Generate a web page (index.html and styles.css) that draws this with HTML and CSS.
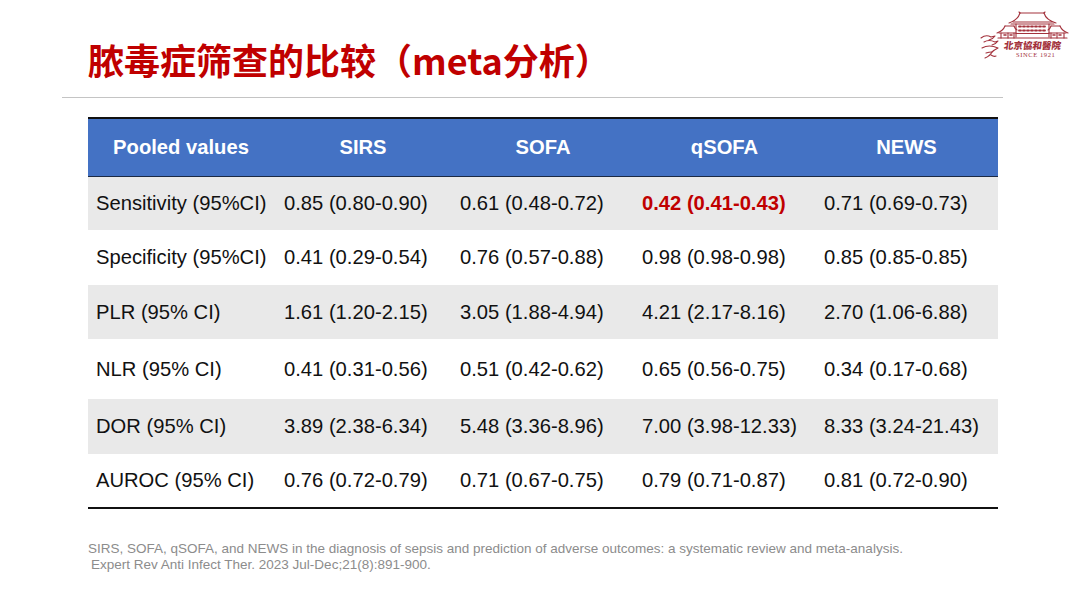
FILE: index.html
```html
<!DOCTYPE html>
<html lang="zh">
<head>
<meta charset="utf-8">
<link rel="stylesheet" href="styles.css">
</head>
<body>
<div class="slide">
  <div class="top">
    <h1 class="title">脓毒症筛查的比较（meta分析）</h1>
    <div class="logo">
      <svg class="logo-art" width="98" height="58" viewBox="0 0 98 58">
        <g fill="none" stroke="#a3323c" stroke-width="1.1" stroke-linejoin="round" stroke-linecap="round">
          <!-- central hall roof -->
          <path d="M42 5 L66 5"/>
          <path d="M41 4 L42 5 M67 4 L66 5"/>
          <path d="M42 5 Q40 12 31 15 M66 5 Q68 12 78 15"/>
          <path d="M35 14 L74 14"/>
          <path d="M33 16 L76 16"/>
          <!-- central body -->
          <path d="M38 16 L38 29 M71 16 L71 29"/>
          <path d="M41 18.5 h2 M45 18.5 h2 M49 18.5 h2 M53 18.5 h2 M57 18.5 h2 M61 18.5 h2 M65 18.5 h2" stroke-width="1.8"/>
          <path d="M41 22.5 h2 M45 22.5 h2 M49 22.5 h2 M53 22.5 h2 M57 22.5 h2 M61 22.5 h2 M65 22.5 h2" stroke-width="1.8"/>
          <path d="M38 25.5 L71 25.5"/>
          <!-- left wing -->
          <path d="M27 18 L36 18"/>
          <path d="M27 18 Q25 23 19 25 M36 18 Q37 21 39 22"/>
          <path d="M21 25 L38 25"/>
          <path d="M23 25 L23 30 M30 25 L30 30 M36 25 L36 30"/>
          <path d="M26 27 h2 M32 27 h2" stroke-width="1.6"/>
          <!-- right wing -->
          <path d="M73 18 L82 18"/>
          <path d="M82 18 Q84 23 90 25 M73 18 Q72 21 70 22"/>
          <path d="M71 25 L88 25"/>
          <path d="M86 25 L86 30 M79 25 L79 30 M73 25 L73 30"/>
          <path d="M75 27 h2 M81 27 h2" stroke-width="1.6"/>
          <path d="M20 30 L89 30"/>
        </g>
        <!-- doves -->
        <g fill="none" stroke="#a3323c" stroke-width="1.1" stroke-linecap="round" stroke-linejoin="round">
          <path d="M3 30 Q8 26 13 29 L17 28 Q15 31 11 32"/>
          <path d="M6 34 Q11 31 17 34 L20 33 Q18 36 14 37"/>
          <path d="M4 40 Q11 36 20 40 Q16 42 14 44 Q12 48 7 50"/>
          <path d="M8 45 Q11 44 14 44"/>
          <path d="M13 47 Q16 49 18 48"/>
        </g>
      </svg>
      <div class="logo-name">北京協和醫院</div>
      <div class="logo-since">SINCE 1921</div>
    </div>
  </div>
  <div class="rule"></div>
  <table class="data">
    <colgroup>
      <col class="c1"><col class="c2"><col class="c3"><col class="c4"><col class="c5">
    </colgroup>
    <thead>
      <tr>
        <th>Pooled values</th><th>SIRS</th><th>SOFA</th><th>qSOFA</th><th>NEWS</th>
      </tr>
    </thead>
    <tbody>
      <tr class="shade r1">
        <td>Sensitivity (95%CI)</td><td>0.85 (0.80-0.90)</td><td>0.61 (0.48-0.72)</td><td class="hl">0.42 (0.41-0.43)</td><td>0.71 (0.69-0.73)</td>
      </tr>
      <tr class="r2">
        <td>Specificity (95%CI)</td><td>0.41 (0.29-0.54)</td><td>0.76 (0.57-0.88)</td><td>0.98 (0.98-0.98)</td><td>0.85 (0.85-0.85)</td>
      </tr>
      <tr class="shade r3">
        <td>PLR (95% CI)</td><td>1.61 (1.20-2.15)</td><td>3.05 (1.88-4.94)</td><td>4.21 (2.17-8.16)</td><td>2.70 (1.06-6.88)</td>
      </tr>
      <tr class="r4">
        <td>NLR (95% CI)</td><td>0.41 (0.31-0.56)</td><td>0.51 (0.42-0.62)</td><td>0.65 (0.56-0.75)</td><td>0.34 (0.17-0.68)</td>
      </tr>
      <tr class="shade r5">
        <td>DOR (95% CI)</td><td>3.89 (2.38-6.34)</td><td>5.48 (3.36-8.96)</td><td>7.00 (3.98-12.33)</td><td>8.33 (3.24-21.43)</td>
      </tr>
      <tr class="r6">
        <td>AUROC (95% CI)</td><td>0.76 (0.72-0.79)</td><td>0.71 (0.67-0.75)</td><td>0.79 (0.71-0.87)</td><td>0.81 (0.72-0.90)</td>
      </tr>
    </tbody>
  </table>
  <div class="source">
    <p>SIRS, SOFA, qSOFA, and NEWS in the diagnosis of sepsis and prediction of adverse outcomes: a systematic review and meta-analysis.</p>
    <p class="indent">Expert Rev Anti Infect Ther. 2023 Jul-Dec;21(8):891-900.</p>
  </div>
</div>
</body>
</html>
```

FILE: styles.css
```css
* { box-sizing: border-box; }
html, body { margin: 0; padding: 0; background: #ffffff; }
.slide {
  width: 1080px;
  height: 608px;
  overflow: hidden;
  font-family: "Liberation Sans", Arial, sans-serif;
  color: #111;
}
.top {
  height: 97px;
  display: flex;
  justify-content: space-between;
  align-items: flex-start;
  padding: 0 4px 0 88px;
}
.title {
  margin: 38px 0 0 0;
  font-family: "Noto Sans CJK SC", "Liberation Sans", sans-serif;
  font-weight: 700;
  font-size: 36px;
  line-height: 42px;
  color: #c00000;
}
.logo {
  position: relative;
  width: 98px;
  height: 58px;
  margin-top: 8px;
}
.logo-art { position: absolute; left: 0; top: 0; }
.logo-name {
  position: absolute;
  left: 26px;
  top: 32px;
  font-family: "Noto Sans CJK TC", sans-serif;
  font-size: 9.5px;
  line-height: 11px;
  font-weight: 900;
  color: #a3323c;
  letter-spacing: 0;
  transform: skewX(-8deg);
}
.logo-name { width: 60px; white-space: nowrap; }
.logo-since {
  position: absolute;
  left: 38px;
  top: 43px;
  font-family: "Liberation Serif", serif;
  font-size: 6.5px;
  line-height: 8px;
  color: #a3323c;
  letter-spacing: 0.6px;
}
.rule {
  margin-left: 62px;
  width: 941px;
  height: 1px;
  background: #c4c4c4;
}
.data {
  margin: 19px 0 0 88px;
  width: 910px;
  table-layout: fixed;
  border-collapse: collapse;
  border-top: 2px solid #111;
  border-bottom: 2px solid #111;
  font-size: 20.2px;
}
.c1 { width: 186px; }
.c2 { width: 178px; }
.c3 { width: 182px; }
.c4 { width: 181px; }
.c5 { width: 183px; }
.data th {
  background: #4472c4;
  color: #ffffff;
  font-weight: 700;
  text-align: center;
  height: 58px;
  padding: 0;
  border-bottom: 1.5px solid #1b2a44;
}
.data td {
  padding: 0 0 0 8px;
  white-space: nowrap;
  color: #111;
}
.data td:nth-child(2) { padding-left: 10px; }
.data td:nth-child(5) { padding-left: 9px; }
.shade td { background: #e9e9e9; }
.r1 td { height: 54px; }
.r2 td { height: 55px; }
.r3 td { height: 54px; }
.r4 td { height: 60px; }
.r5 td { height: 55px; }
.r6 td { height: 54px; }
.data td.hl { color: #c00000; font-weight: 700; }
.source {
  margin: 32px 0 0 88px;
  font-size: 13.5px;
  line-height: 16px;
  color: #8c8c8c;
}
.source p { margin: 0; }
.source .indent { padding-left: 3px; }
```
